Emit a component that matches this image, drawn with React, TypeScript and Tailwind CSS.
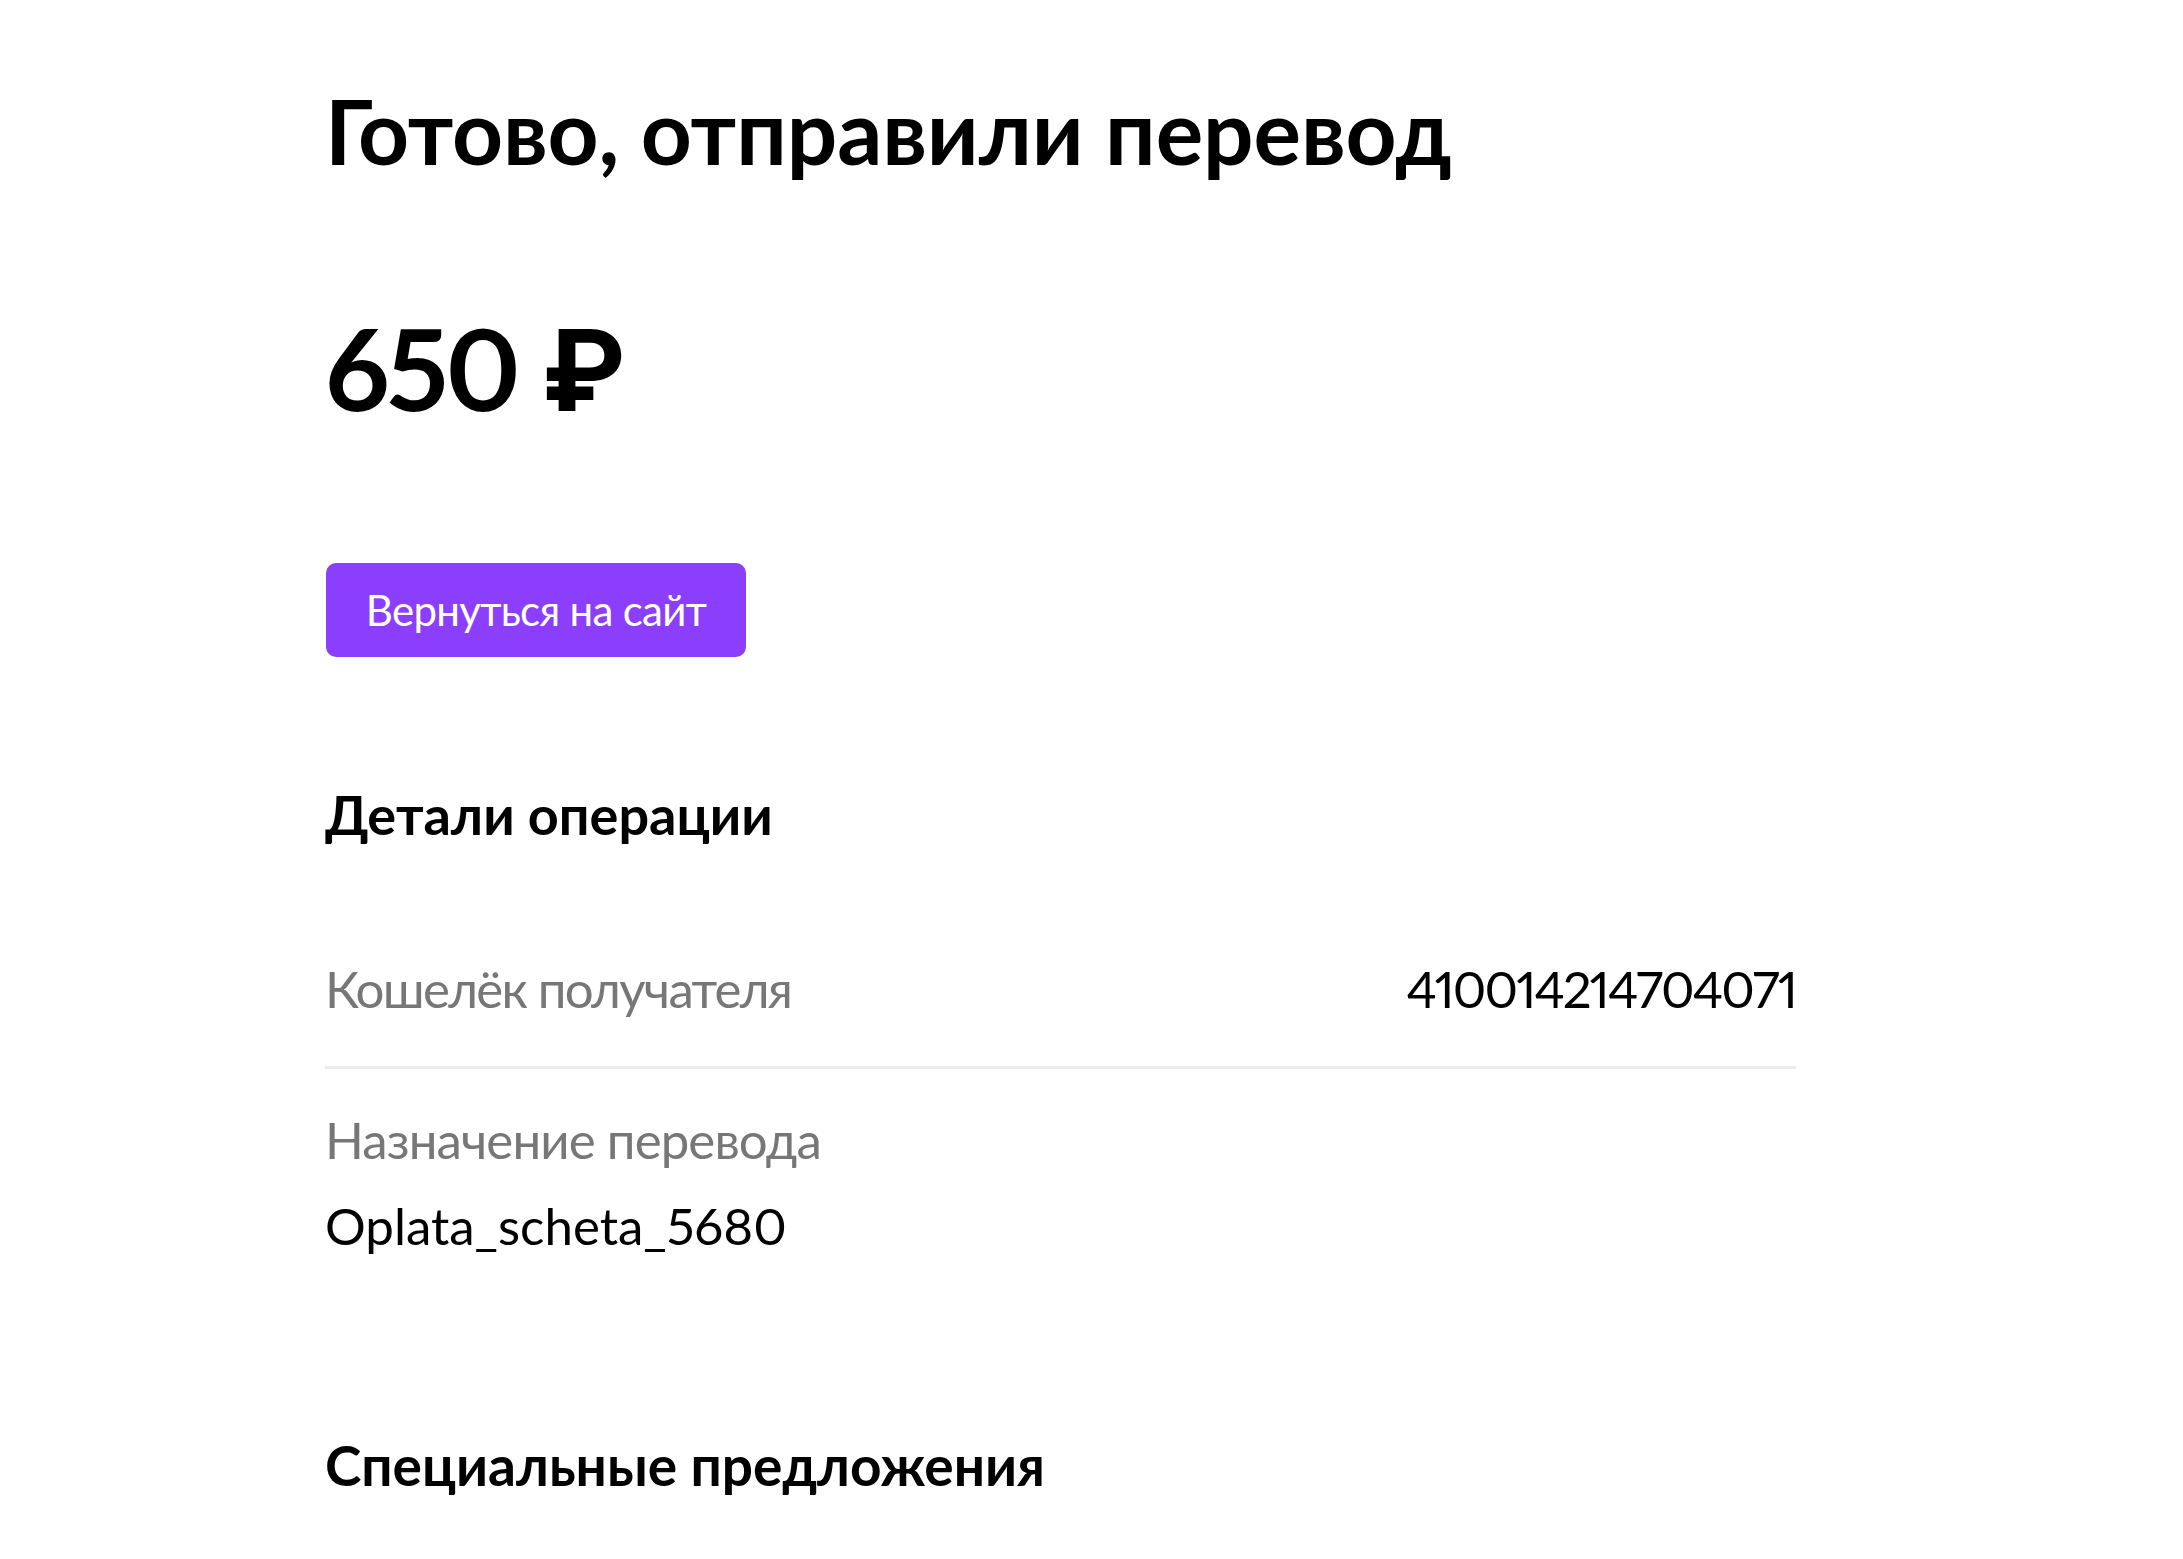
import React from "react";

export default function App() {
  const font = { fontFamily: "Lato, Inter, 'Noto Sans', sans-serif" };
  return (
    <div className="min-h-screen bg-white text-black proportional-nums" style={font}>
      <div className="pl-[325px] pt-[81px]">
        <div className="w-[1471px]">
          <h1 className="text-[89px] leading-[100px] font-bold tracking-[-0.1px]">
            Готово, отправили перевод
          </h1>
          <div className="mt-[126px] text-[113px] leading-[120px] font-bold tracking-[-3.2px]">
            650 ₽
          </div>
          <button className="ml-[1px] mt-[136px] flex h-[94px] w-[420px] items-center justify-center rounded-[10px] bg-[#8b3ffd] text-[42px] tracking-[-0.7px] text-white">
            Вернуться на сайт
          </button>
          <h2 className="mt-[126px] text-[54px] leading-[64px] font-bold">
            Детали операции
          </h2>
          <div className="mt-[112px] flex items-start justify-between border-b-[3px] border-[#ececec] pb-[47px]">
            <div className="text-[51px] leading-[60px] tracking-[-1.7px] text-[#777777]">Кошелёк получателя</div>
            <div className="text-[51px] leading-[60px] tracking-[-1.9px] text-black">410014214704071</div>
          </div>
          <div className="pt-[41px]">
            <div className="text-[51px] leading-[60px] tracking-[-0.9px] text-[#777777]">Назначение перевода</div>
            <div className="mt-[26px] text-[51px] leading-[60px] text-black">Oplata_scheta_5680</div>
          </div>
          <h2 className="mt-[177px] text-[55px] leading-[64px] font-bold">
            Специальные предложения
          </h2>
        </div>
      </div>
    </div>
  );
}
